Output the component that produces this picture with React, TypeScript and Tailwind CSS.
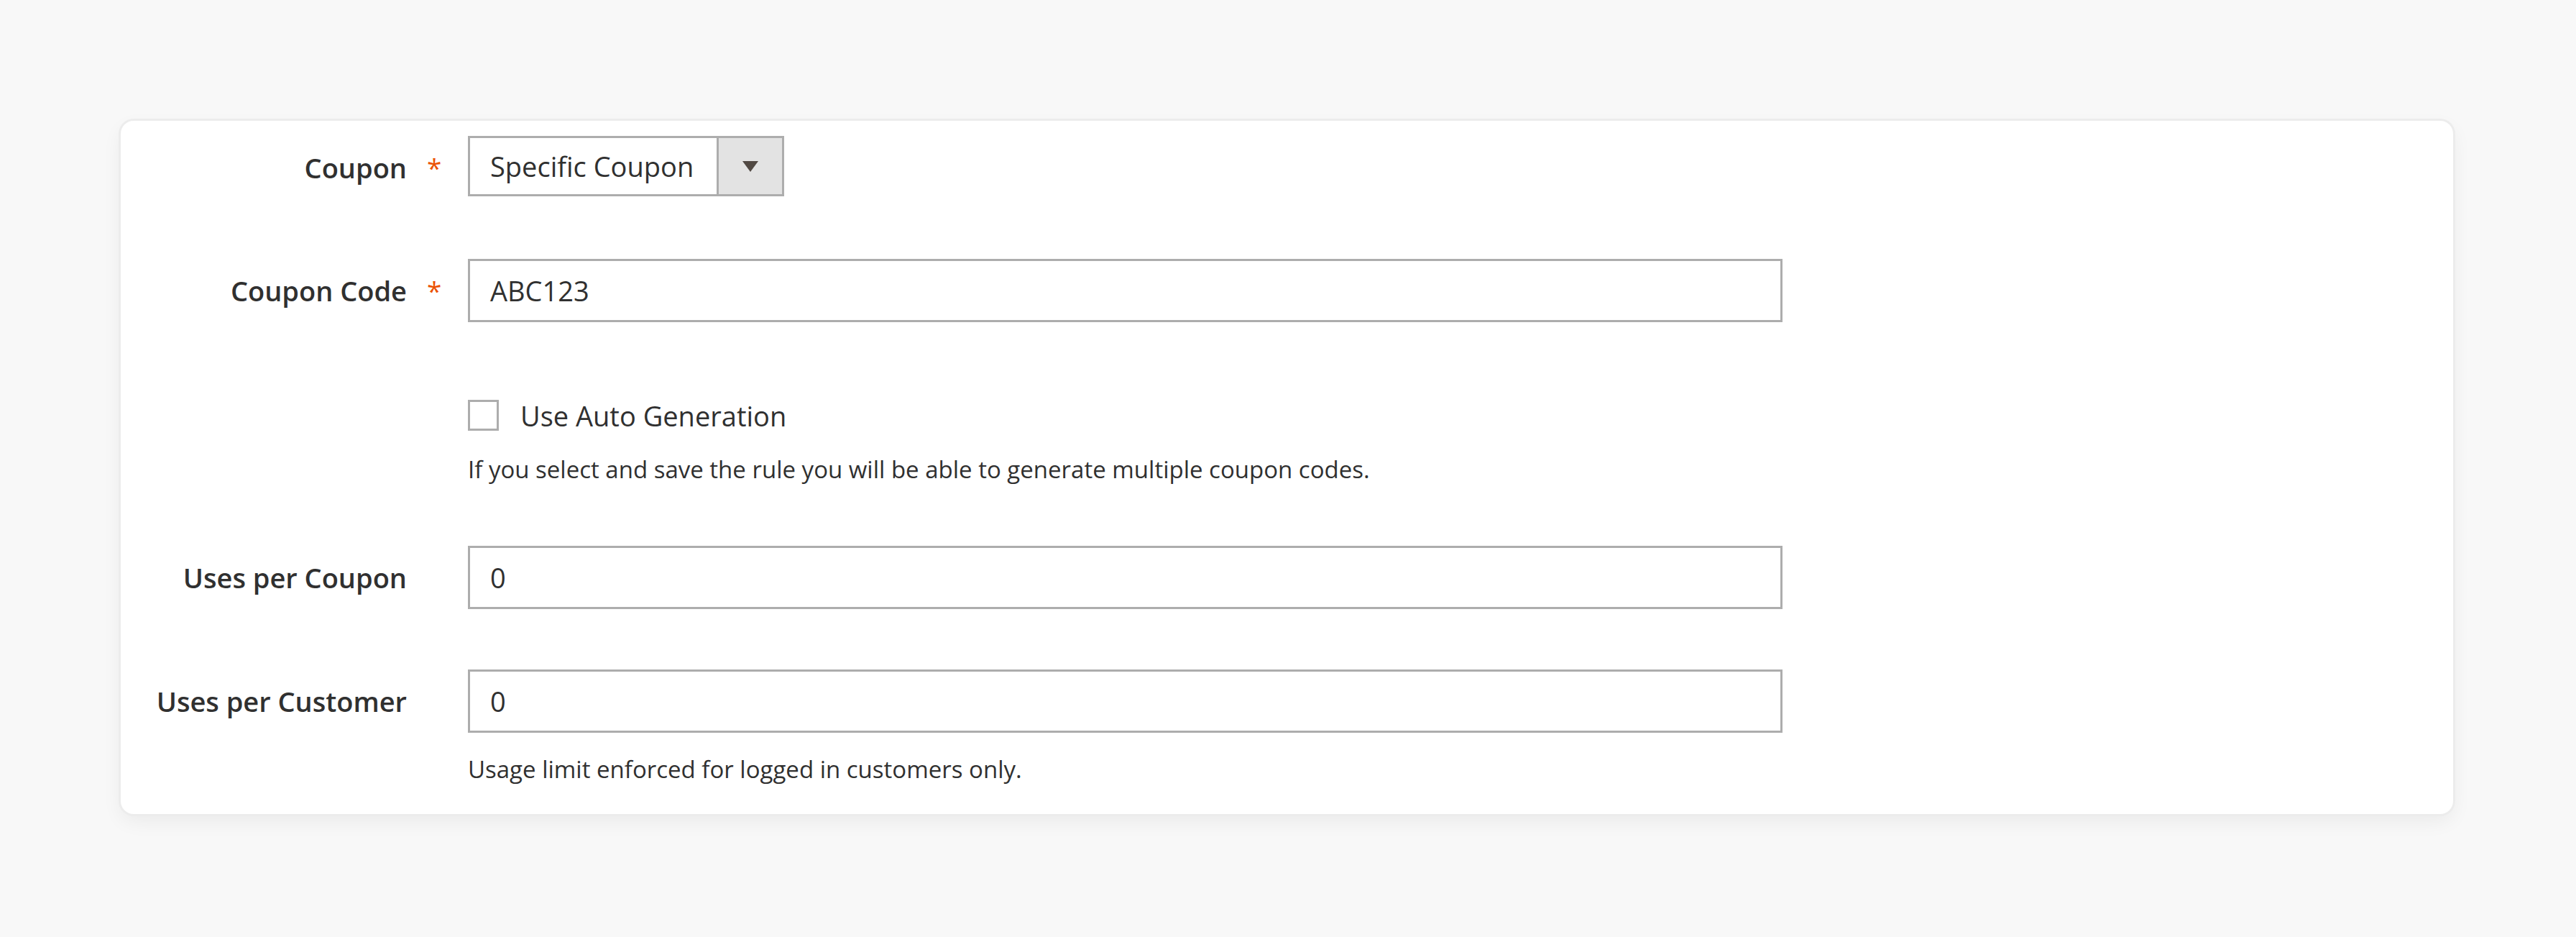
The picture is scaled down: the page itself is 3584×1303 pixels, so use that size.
import React from "react";

const font = { fontFamily: '"Open Sans", "Noto Sans", sans-serif' };

function Label({ text, required, extra = "" }: { text: string; required?: boolean; extra?: string }) {
  return (
    <>
      <div className={`w-[398px] shrink-0 text-right text-[38px] font-semibold leading-[52px] text-[#303030] ${extra}`}>{text}</div>
      <div className={`w-[85px] shrink-0 pl-[28px] text-[37px] leading-[52px] text-[#eb5202] ${extra}`}>{required ? "*" : ""}</div>
    </>
  );
}

function TextInput({ value }: { value: string }) {
  return (
    <div className="flex h-[88px] w-[1829px] items-center border-[3px] border-[#adadad] bg-white pl-[28px] text-[38px] text-[#303030]">
      {value}
    </div>
  );
}

export default function App() {
  return (
    <div className="h-[1303px] w-full bg-[#f8f8f8] pt-[168px]" style={font}>
      <div className="ml-[168px] w-[3245px] rounded-[18px] bg-white pt-[21px] pb-[40px] shadow-[0_0_0_3px_#ececec,0_10px_28px_rgba(0,0,0,0.06)]">
        {/* Coupon */}
        <div className="flex h-[84px] items-center">
          <Label text="Coupon" required extra="mt-[3px]" />
          <div className="flex h-[84px] w-[440px] border-[3px] border-[#adadad] bg-white">
            <div className="flex flex-1 items-center pl-[28px] text-[38px] text-[#303030]">Specific Coupon</div>
            <div className="flex w-[91px] items-center justify-center border-l-[3px] border-[#adadad] bg-[#e3e3e3]">
              <svg width="22" height="15" viewBox="0 0 22 15">
                <polygon points="0,0 22,0 11,15" fill="#514943" />
              </svg>
            </div>
          </div>
        </div>

        {/* Coupon Code */}
        <div className="mt-[87px] flex h-[88px] items-center">
          <Label text="Coupon Code" required />
          <TextInput value="ABC123" />
        </div>

        {/* Auto generation */}
        <div className="mt-[108px] flex">
          <div className="w-[483px] shrink-0" />
          <div>
            <div className="flex h-[43px] items-center">
              <div className="h-[43px] w-[43px] border-[3px] border-[#adadad] bg-white" />
              <span className="ml-[30px] text-[38px] leading-[52px] text-[#303030]">Use Auto Generation</span>
            </div>
            <div className="mt-[32px] text-[33px] leading-[44px] text-[#303030]">
              If you select and save the rule you will be able to generate multiple coupon codes.
            </div>
          </div>
        </div>

        {/* Uses per Coupon */}
        <div className="mt-[84px] flex h-[88px] items-center">
          <Label text="Uses per Coupon" />
          <TextInput value="0" />
        </div>

        {/* Uses per Customer */}
        <div className="mt-[84px] flex h-[88px] items-center">
          <Label text="Uses per Customer" />
          <TextInput value="0" />
        </div>
        <div className="mt-[29px] flex">
          <div className="w-[483px] shrink-0" />
          <div className="text-[33px] leading-[44px] text-[#303030]">Usage limit enforced for logged in customers only.</div>
        </div>
      </div>
    </div>
  );
}
